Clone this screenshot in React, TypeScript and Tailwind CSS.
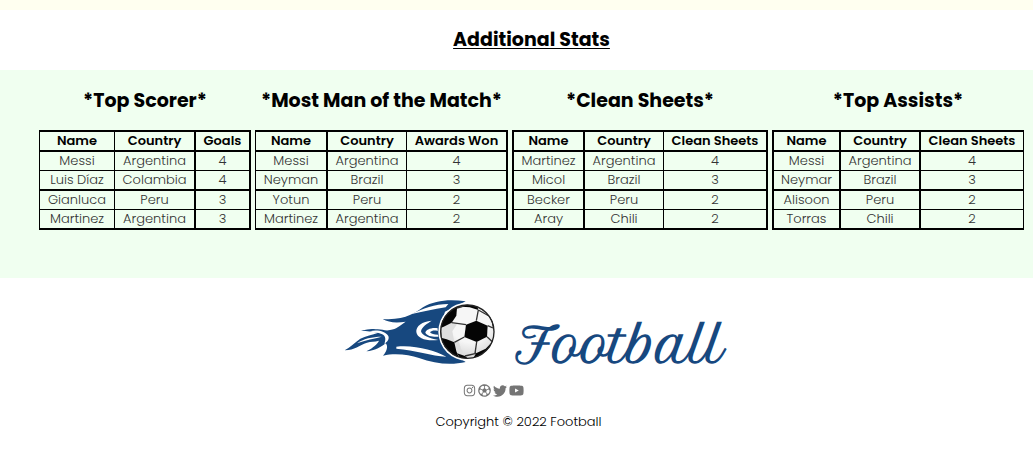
import { FaInstagram, FaRegFutbol, FaTwitter, FaYoutube } from "react-icons/fa";

type Row = [string, string, number];

interface Stat {
  title: string;
  valueLabel: string;
  rows: Row[];
  cols: [string, string, string];
  // Rule thickness: left edge, before country, before value, right edge
  rules: [string, string, string, string];
}

const stats: Stat[] = [
  {
    title: "*Top Scorer*",
    valueLabel: "Goals",
    rows: [
      ["Messi", "Argentina", 4],
      ["Luis Díaz", "Colambia", 4],
      ["Gianluca", "Peru", 3],
      ["Martinez", "Argentina", 3],
    ],
    cols: ["w-[75px]", "w-[80px]", "w-auto"],
    rules: ["border-l", "border-l", "border-l-2", "border-r-2"],
  },
  {
    title: "*Most Man of the Match*",
    valueLabel: "Awards Won",
    rows: [
      ["Messi", "Argentina", 4],
      ["Neyman", "Brazil", 3],
      ["Yotun", "Peru", 2],
      ["Martinez", "Argentina", 2],
    ],
    cols: ["w-[71px]", "w-[80px]", "w-auto"],
    rules: ["border-l", "border-l-2", "border-l", "border-r-2"],
  },
  {
    title: "*Clean Sheets*",
    valueLabel: "Clean Sheets",
    rows: [
      ["Martinez", "Argentina", 4],
      ["Micol", "Brazil", 3],
      ["Becker", "Peru", 2],
      ["Aray", "Chili", 2],
    ],
    cols: ["w-[71px]", "w-[80px]", "w-auto"],
    rules: ["border-l-2", "border-l-2", "border-l", "border-r-2"],
  },
  {
    title: "*Top Assists*",
    valueLabel: "Clean Sheets",
    rows: [
      ["Messi", "Argentina", 4],
      ["Neymar", "Brazil", 3],
      ["Alisoon", "Peru", 2],
      ["Torras", "Chili", 2],
    ],
    cols: ["w-[67px]", "w-[80px]", "w-auto"],
    rules: ["border-l-2", "border-l-2", "border-l-2", "border-r"],
  },
];

const rowRules = ["border-b", "border-b-2", "border-b", "border-b-2"];

function StatTable({ stat }: { stat: Stat }) {
  const [left, country, value, right] = stat.rules;
  return (
    <section>
      <h3 className="mb-[15px] text-center text-[19px] leading-7 font-bold whitespace-nowrap">
        {stat.title}
      </h3>
      <table
        aria-label={stat.title}
        className="w-full table-fixed border-separate border-spacing-0 text-center text-[13px] leading-[18px]"
      >
        <colgroup>
          {stat.cols.map((c, i) => (
            <col key={i} className={c} />
          ))}
        </colgroup>
        <thead>
          <tr className="whitespace-nowrap">
            <th className={`border-y-2 border-black p-0 font-semibold ${left}`}>Name</th>
            <th className={`border-y-2 border-black p-0 font-semibold ${country}`}>Country</th>
            <th className={`border-y-2 border-black p-0 font-semibold ${value} ${right}`}>
              {stat.valueLabel}
            </th>
          </tr>
        </thead>
        <tbody className="font-light text-[#333]">
          {stat.rows.map((r, i) => (
            <tr key={i} className="whitespace-nowrap">
              <td className={`border-black p-0 ${rowRules[i]} ${left}`}>{r[0]}</td>
              <td className={`border-black p-0 ${rowRules[i]} ${country}`}>{r[1]}</td>
              <td className={`border-black p-0 ${rowRules[i]} ${value} ${right}`}>{r[2]}</td>
            </tr>
          ))}
        </tbody>
      </table>
    </section>
  );
}

function FlamingBall() {
  return (
    <svg viewBox="27 24 456 201" className="h-[67px] w-[152px] shrink-0" aria-hidden="true">
      <defs>
        <clipPath id="ball">
          <circle cx="397" cy="125" r="81" />
        </clipPath>
        <radialGradient id="shade" cx="0.55" cy="0.35" r="0.7">
          <stop offset="0.5" stopColor="#f6f6f6" />
          <stop offset="1" stopColor="#cfcfcf" />
        </radialGradient>
      </defs>
      <g fill="#17487f">
        <path d="M392 34C345 27 300 30 264 52C240 68 210 92 143 87C160 98 185 99 212 95C190 110 186 116 165 120C150 124 140 116 122 118C104 114 95 121 78 120C98 126 110 124 130 128C112 134 92 138 76 146C60 158 44 172 29 181C60 180 72 166 96 158C108 153 118 156 132 152C126 164 116 172 94 184C120 182 138 172 152 160C160 168 156 184 144 197C180 188 222 194 252 204C300 222 350 226 392 216L330 175L312 125L330 65Z" />
      </g>
      <g fill="#fff">
        <path d="M340 42C300 42 262 56 230 72C262 66 296 58 332 52Z" />
        <path d="M290 92C262 94 242 108 244 126C247 146 275 154 310 150C282 144 262 138 258 124C260 110 278 100 290 92Z" />
        <path d="M308 115C288 112 272 120 271 128C276 138 292 141 310 140L309 134C298 134 288 132 285 127C290 121 300 121 308 123Z" />
        <path d="M184 170C240 164 300 182 334 200C290 198 240 180 184 176Z" />
        <path d="M104 124C126 118 152 124 160 138C164 148 156 156 148 162C152 150 154 138 140 132C128 128 116 128 104 124Z" />
        <path d="M66 160C84 146 112 140 140 140C118 146 92 150 66 160Z" />
      </g>
      <circle cx="397" cy="125" r="87" fill="#fff" />
      <circle cx="397" cy="125" r="81" fill="url(#shade)" />
      <g clipPath="url(#ball)">
        <g fill="#dedede">
          <path d="M326 110L350 98L366 103L352 124L358 157L335 148L318 135Z" />
          <path d="M358 157L370 150L378 176L394 204L372 200Z" />
        </g>
        <g fill="#050505">
          <path d="M393 104L424 92L458 107L456 140L425 156L388 141Z" />
          <path d="M316 70L345 46L366 54L364 77L350 98L326 110L308 118Z" />
          <path d="M372 38L424 38L430 60L404 52L382 50Z" />
          <path d="M462 78L485 88L488 130L474 114L470 96Z" />
          <path d="M314 142L335 148L358 157L364 184L374 208L338 200Z" />
          <path d="M423 190L452 176L472 155L480 165L448 206L410 214Z" />
          <path d="M366 190L390 198L404 210L380 212Z" />
        </g>
        <g fill="none" stroke="#333" strokeWidth="4">
          <path d="M350 98L393 104M430 60L424 92M366 54L382 50M430 60L462 78M458 107L474 114M456 140L472 155M425 156L420 190M388 141L358 157M316 114L318 146M390 198L423 190" />
        </g>
      </g>
      <circle cx="397" cy="125" r="80" fill="none" stroke="#222" strokeWidth="4" />
    </svg>
  );
}

const socials = [
  { label: "Instagram", Icon: FaInstagram, size: "size-[13px]" },
  { label: "Football", Icon: FaRegFutbol, size: "size-[13px]" },
  { label: "Twitter", Icon: FaTwitter, size: "size-[14px]" },
  { label: "YouTube", Icon: FaYoutube, size: "size-[15px]" },
];

export default function App() {
  return (
    <div className="bg-white font-[Poppins,Inter,sans-serif] text-black">
      <div className="h-2.5 bg-[#fffff0]" />
      <header className="py-4 pl-[30px] text-center">
        <h2 className="text-[19px] leading-7 font-bold underline decoration-1 underline-offset-2">
          Additional Stats
        </h2>
      </header>
      <main className="grid grid-cols-[212fr_253fr_256fr_252fr] gap-1 bg-[#f0fff0] pt-[17px] pr-[9px] pb-12 pl-[39px]">
        {stats.map((s) => (
          <StatTable key={s.title} stat={s} />
        ))}
      </main>
      <footer className="flex flex-col items-center pt-5 pb-6">
        <div className="flex items-start gap-5 pl-9">
          <FlamingBall />
          <span className="pt-5 font-['Petit_Formal_Script','Playball','Liberation_Serif',serif] text-[47px] leading-[56px] font-bold text-[#17487f]">
            Football
          </span>
        </div>
        <nav className="mt-2 flex items-center gap-[2px] pt-px pr-[47px] text-[#757575]">
          {socials.map(({ label, Icon, size }) => (
            <a key={label} href="#" aria-label={label}>
              <Icon className={size} />
            </a>
          ))}
        </nav>
        <p className="mt-3.5 pl-1 text-[13px] leading-5 font-light">Copyright © 2022 Football</p>
      </footer>
    </div>
  );
}
